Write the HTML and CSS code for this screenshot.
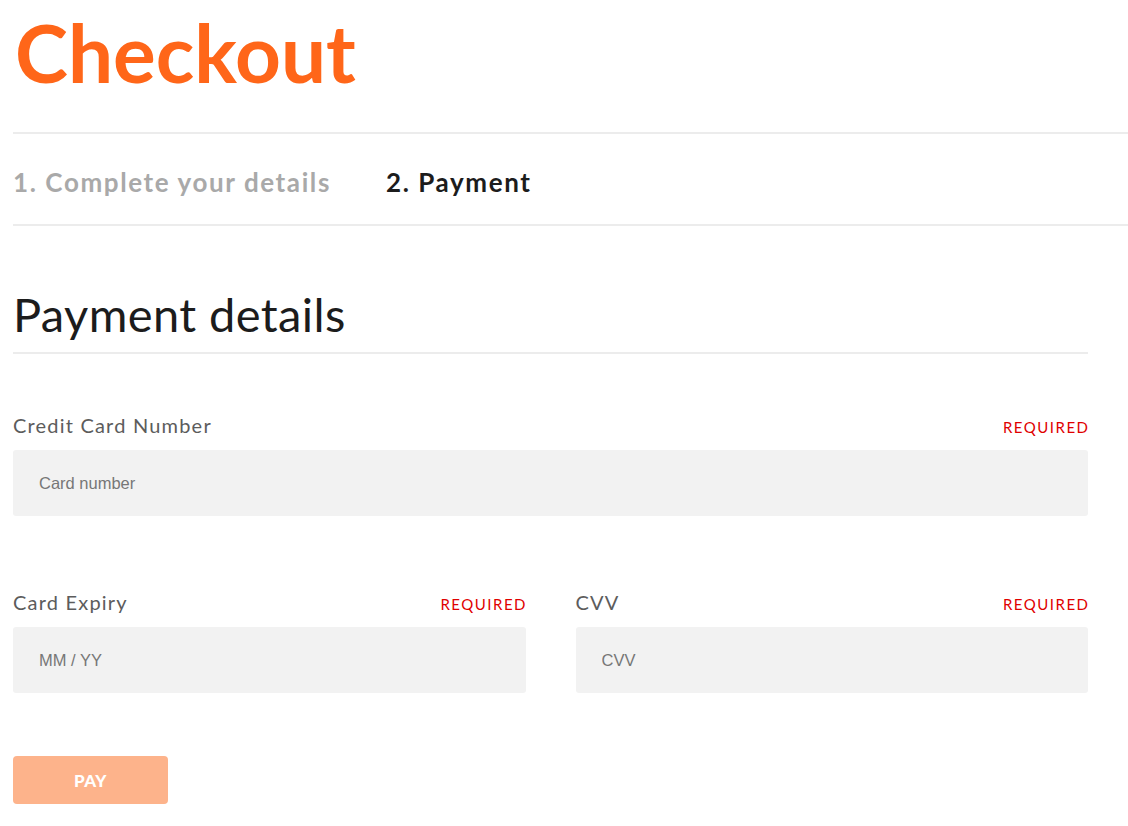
FILE: index.html
```html
<!DOCTYPE html>
<html lang="en">
<head>
    <meta charset="UTF-8">
    <meta name="viewport" content="width=device-width, initial-scale=1.0">
    <title>Checkout</title>
    <link rel="stylesheet" href="styles.css">
</head>
<body>
    <div class="page">
        <h1 class="page-title">Checkout</h1>

        <div class="steps">
            <span class="step">1. Complete your details</span>
            <span class="step active">2. Payment</span>
        </div>

        <form class="payment-form">
            <h2 class="section-title">Payment details</h2>

            <div class="field">
                <div class="field-head">
                    <label for="card-number">Credit Card Number</label>
                    <span class="required">REQUIRED</span>
                </div>
                <input id="card-number" type="text" placeholder="Card number">
            </div>

            <div class="field-row">
                <div class="field">
                    <div class="field-head">
                        <label for="card-expiry">Card Expiry</label>
                        <span class="required">REQUIRED</span>
                    </div>
                    <input id="card-expiry" type="text" placeholder="MM / YY">
                </div>
                <div class="field">
                    <div class="field-head">
                        <label for="cvv">CVV</label>
                        <span class="required">REQUIRED</span>
                    </div>
                    <input id="cvv" type="text" placeholder="CVV">
                </div>
            </div>

            <button type="button" class="pay-button">PAY</button>
        </form>
    </div>
</body>
</html>
```

FILE: styles.css
```css
body {
    margin: 0;
    font-family: 'Lato', 'Open Sans', sans-serif;
    background-color: #fff;
    color: #222;
}
.page {
    padding-left: 13px;
}
.page-title {
    margin: 0;
    height: 134px;
    box-sizing: border-box;
    padding-top: 7px;
    padding-left: 2px;
    font-size: 80px;
    font-weight: 700;
    line-height: 90px;
    color: #ff6619;
    border-bottom: 2px solid #ececec;
}
.steps {
    display: flex;
    gap: 55px;
    height: 92px;
    box-sizing: border-box;
    padding-top: 6px;
    align-items: center;
    border-bottom: 2px solid #ececec;
    font-size: 26px;
    font-weight: 700;
    letter-spacing: 1.6px;
}
.step {
    color: #a9a9a9;
}
.step.active {
    color: #1c1c1c;
}
.payment-form {
    width: 1075px;
}
.section-title {
    margin: 0;
    padding-top: 61px;
    height: 128px;
    box-sizing: border-box;
    font-size: 47px;
    font-weight: 400;
    line-height: 54px;
    letter-spacing: 0.4px;
    color: #1c1c1c;
    border-bottom: 2px solid #ececec;
}
.field {
    flex: 1;
}
.payment-form > .field {
    margin-top: 54px;
}
.field-head {
    display: flex;
    justify-content: space-between;
    align-items: baseline;
    height: 42px;
    line-height: 35px;
}
.field-head label {
    font-size: 20px;
    color: #5c5c5c;
    letter-spacing: 1.2px;
}
.required {
    font-size: 15px;
    color: #e00000;
    letter-spacing: 1.5px;
    margin-right: -1.5px;
}
input {
    display: block;
    width: 100%;
    height: 66px;
    box-sizing: border-box;
    padding: 0 26px;
    border: none;
    border-radius: 3px;
    background-color: #f2f2f2;
    font-family: 'Liberation Sans', Arial, sans-serif;
    font-size: 16.5px;
    color: #333;
}
input::placeholder {
    color: #777;
}
.field-row {
    display: flex;
    gap: 50px;
    margin-top: 69px;
}
.pay-button {
    display: block;
    margin-top: 63px;
    width: 155px;
    height: 48px;
    border: none;
    border-radius: 4px;
    background-color: #fdb38b;
    color: #fff;
    font-family: 'Lato', sans-serif;
    font-size: 17px;
    font-weight: 900;
    letter-spacing: 0.5px;
    cursor: pointer;
}
```
